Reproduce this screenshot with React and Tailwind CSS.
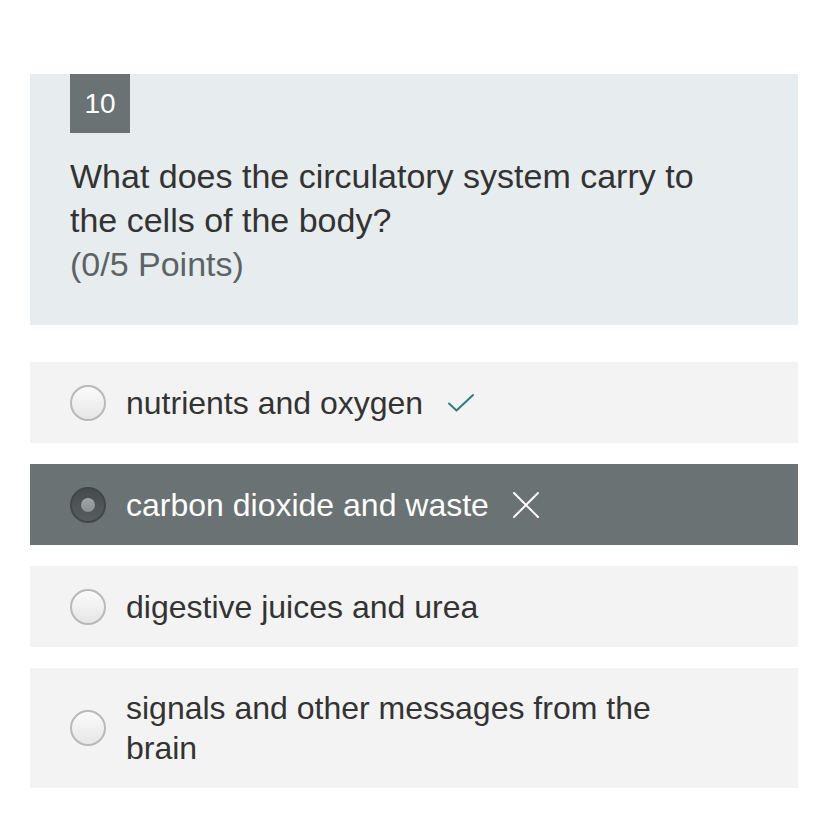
import { useState } from 'react';

const options = [
  { id: 'a', label: 'nutrients and oxygen', mark: 'correct' },
  { id: 'b', label: 'carbon dioxide and waste', mark: 'wrong' },
  { id: 'c', label: 'digestive juices and urea' },
  { id: 'd', label: 'signals and other messages from the brain' },
];

const CheckIcon = () => (
  <svg width="28" height="20" viewBox="0 0 28 20" fill="none" className="shrink-0">
    <path d="M2 10.5 L9.5 17.5 L26 2" stroke="#2f7f78" strokeWidth="2" strokeLinecap="round" strokeLinejoin="round" />
  </svg>
);

const CrossIcon = () => (
  <svg width="28" height="28" viewBox="0 0 28 28" fill="none" className="shrink-0">
    <path d="M2 2 L26 26 M26 2 L2 26" stroke="#ffffff" strokeWidth="2" strokeLinecap="round" />
  </svg>
);

const Radio = ({ checked }) =>
  checked ? (
    <span className="flex h-[36px] w-[36px] shrink-0 items-center justify-center rounded-full border-2 border-[#414749] bg-gradient-to-b from-[#464c4e] to-[#575d5f]">
      <span className="h-[14px] w-[14px] rounded-full bg-gradient-to-b from-[#a3a6a7] to-[#8c9091]" />
    </span>
  ) : (
    <span className="h-[36px] w-[36px] shrink-0 rounded-full border-2 border-[#b9b9b9] bg-gradient-to-b from-[#fbfbfb] to-[#e6e6e6]" />
  );

export default function App() {
  const [selected, setSelected] = useState('b');

  return (
    <div className="min-h-[828px] w-full bg-white pt-[74px] pl-[30px] pr-[30px] font-['Liberation_Sans',Arial,sans-serif]">
      <div className="w-[768px]">
        <div className="bg-[#e7edef] pl-[40px] pb-[39px]">
          <div className="flex h-[59px] w-[60px] items-center justify-center bg-[#6b7274] text-[28px] text-white">
            10
          </div>
          <p className="mt-[21px] w-[660px] text-[34px] leading-[44px] text-[#333333]">
            What does the circulatory system carry to the cells of the body?
          </p>
          <p className="text-[34px] leading-[44px] text-[#5d6365]">(0/5 Points)</p>
        </div>

        <div className="mt-[37px] flex flex-col gap-[21px]">
          {options.map((opt) => {
            const isSel = selected === opt.id;
            return (
              <button
                key={opt.id}
                onClick={() => setSelected(opt.id)}
                className={`flex min-h-[81px] w-full items-center py-[20px] pl-[40px] pr-[40px] text-left ${
                  isSel ? 'bg-[#6b7274] text-white' : 'bg-[#f3f3f3] text-[#333333]'
                }`}
              >
                <Radio checked={isSel} />
                <span className="ml-[20px] flex max-w-[540px] items-center text-[32px] leading-[40px]">
                  {opt.label}
                </span>
                {opt.mark === 'correct' && (
                  <span className="ml-[24px] flex items-center">
                    <CheckIcon />
                  </span>
                )}
                {opt.mark === 'wrong' && (
                  <span className="ml-[23px] flex items-center">
                    <CrossIcon />
                  </span>
                )}
              </button>
            );
          })}
        </div>
      </div>
    </div>
  );
}
